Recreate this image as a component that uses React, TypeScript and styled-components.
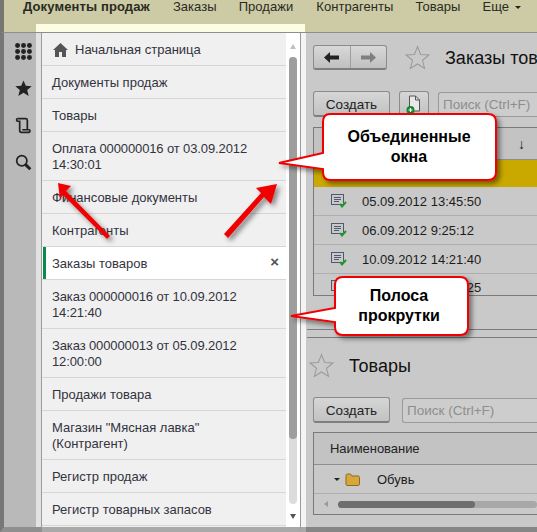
import React from "react";
import styled, { createGlobalStyle } from "styled-components";

const Global = createGlobalStyle`
  html, body { margin: 0; padding: 0; background: #c9c9c9; }
  body { font-family: "Liberation Sans", Arial, sans-serif; }
  * { box-sizing: border-box; }
`;

const Page = styled.div`
  position: relative;
  width: 537px;
  height: 532px;
  overflow: hidden;
  display: flex;
  flex-direction: column;
  background: #7a7a7a;
`;

const TopBar = styled.header`
  position: relative;
  height: 33px;
  flex: none;
  background: #cccba6;
  border-left: 4px solid #777770;
  border-bottom: 1px solid #8e8e8a;
  padding: 0 0 0 19px;
  display: flex;
  align-items: flex-start;
  font-size: 13px;
  line-height: 14px;
  color: #2a2a22;
  &::after {
    content: "";
    position: absolute;
    left: 32px;
    top: 24px;
    width: 269px;
    height: 8px;
    background: #fdfde6;
  }
`;

const MenuItem = styled.span<{ $bold?: boolean; $after: number }>`
  font-weight: ${(p) => (p.$bold ? 700 : 400)};
  letter-spacing: ${(p) => (p.$bold ? "0.12px" : "0.05px")};
  margin-right: ${(p) => p.$after}px;
  white-space: nowrap;
`;

const Caret = styled.span`
  display: inline-block;
  margin-left: 6px;
  vertical-align: 2px;
  border-left: 3px solid transparent;
  border-right: 3px solid transparent;
  border-top: 3px solid #222;
`;

const Body = styled.div`
  flex: 1;
  min-height: 0;
  display: flex;
`;

const Rail = styled.nav`
  width: 42px;
  flex: none;
  border-left: 4px solid #777777;
  border-right: 1px solid #9b9b9b;
  border-bottom: 5px solid #8f8f8f;
  box-shadow: inset -5px 0 0 #e2e2e2;
  background: #b9b9b9;
  padding: 10px 7px 0 9px;
  display: flex;
  flex-direction: column;
  align-items: center;
  gap: 20px;
`;

const RailIcon = styled.svg`
  width: 17px;
  height: 17px;
  flex: none;
  display: block;
`;

const ListPanel = styled.aside`
  width: 244px;
  flex: none;
  background: #f0f0f0;
  border-bottom: 5px solid #a9a9a9;
  display: flex;
  flex-direction: column;
`;

const Item = styled.div<{ $active?: boolean; $tight?: boolean }>`
  position: relative;
  flex: none;
  padding: 9px 8px 7px 10px;
  display: flex;
  align-items: center;
  font-size: 13px;
  line-height: 16px;
  letter-spacing: ${(p) => (p.$tight ? "-0.12px" : "0")};
  color: #333340;
  background: ${(p) => (p.$active ? "#ffffff" : "transparent")};
  border-bottom: 1px solid #d6d6d6;
  ${(p) => (p.$active ? "box-shadow: inset 1px 0 0 #fff, inset 4px 0 0 #0b8a4a;" : "")}
`;

const Close = styled.span`
  position: absolute;
  right: 7px;
  top: 7px;
  font-size: 15px;
  font-weight: 700;
  color: #555;
`;

const HomeGlyph = styled.svg`
  width: 15px;
  height: 14px;
  margin-right: 7px;
  margin-left: 1px;
`;

const ScrollGutter = styled.div`
  width: 15px;
  flex: none;
  background: #fff;
  border-right: 1px solid #9a9a9a;
  border-bottom: 5px solid #a9a9a9;
  display: flex;
  flex-direction: column;
  align-items: center;
  padding: 11px 0 8px 0;
`;

const ArrowUp = styled.span`
  border-left: 3px solid transparent;
  border-right: 3px solid transparent;
  border-bottom: 5px solid #c0c0c0;
`;

const ArrowDown = styled.span`
  border-left: 3px solid transparent;
  border-right: 3px solid transparent;
  border-top: 5px solid #555;
  margin-top: 10px;
`;

const Track = styled.div`
  flex: 1;
  width: 8px;
  margin-top: 8px;
  border-radius: 4px;
  background: #dcdcdc;
  display: flex;
`;

const Thumb = styled.div`
  width: 8px;
  height: 382px;
  border-radius: 4px;
  background: #9e9e9e;
`;

const WhiteSep = styled.div`
  width: 5px;
  flex: none;
  background: #f4f4f4;
  border-bottom: 5px solid #a9a9a9;
`;

const Main = styled.main`
  flex: 1;
  min-width: 0;
  background: #c9c9c9;
  border-bottom: 5px solid #868686;
  display: flex;
  flex-direction: column;
  overflow: hidden;
`;

const TopSection = styled.section`
  height: 305px;
  flex: none;
  padding: 12px 0 0 7px;
  display: flex;
  flex-direction: column;
`;

const Row = styled.div`
  display: flex;
  align-items: center;
`;

const HeadRow = styled(Row)`
  gap: 15px;
`;

const NavGroup = styled.div`
  width: 74px;
  height: 25px;
  flex: none;
  margin-right: 3px;
  border: 1px solid #8b8b8b;
  border-bottom: 2px solid #7e7e7e;
  border-radius: 3px;
  background: linear-gradient(#d8d8d8, #c0c0c0);
  display: flex;
`;

const NavBtn = styled.div<{ $first?: boolean }>`
  flex: 1;
  display: flex;
  align-items: center;
  justify-content: center;
  ${(p) => (p.$first ? "border-right: 1px solid #a0a0a0;" : "")}
`;

const Star = styled.svg`
  width: 25px;
  height: 25px;
  flex: none;
`;

const Title = styled.h2`
  margin: 0;
  font-size: 18px;
  line-height: 22px;
  font-weight: 400;
  color: #111;
  white-space: nowrap;
`;

const Toolbar = styled(Row)`
  margin-top: 21px;
  gap: 9px;
`;

const Button = styled.div<{ $w: number }>`
  width: ${(p) => p.$w}px;
  height: 26px;
  border: 1px solid #8b8b8b;
  border-bottom: 2px solid #7e7e7e;
  border-radius: 3px;
  background: linear-gradient(#d6d6d6, #c2c2c2);
  font-size: 13.5px;
  line-height: 25px;
  text-align: center;
  color: #222;
  flex: none;
`;

const Search = styled.div`
  flex: 1;
  height: 25px;
  border: 1px solid #9a9a9a;
  border-right: none;
  border-radius: 3px 0 0 3px;
  background: #cdcdcd;
  padding-left: 4px;
  font-size: 13.5px;
  line-height: 23px;
  color: #8e8e8e;
  white-space: nowrap;
`;

const Table = styled.div<{ $h: number; $mt: number }>`
  margin-top: ${(p) => p.$mt}px;
  height: ${(p) => p.$h}px;
  flex: none;
  border: 1px solid #7a7a7a;
  border-right: none;
  display: flex;
  flex-direction: column;
  overflow: hidden;
`;

const HeaderRow = styled.div`
  height: 32px;
  flex: none;
  background: #c3c3c3;
  border-bottom: 1px solid #8e8e8e;
  font-size: 13px;
  letter-spacing: -0.05px;
  color: #222;
  padding-left: 16px;
  display: flex;
  align-items: center;
  justify-content: space-between;
`;

const SortMark = styled.span`
  margin-right: 12px;
  font-size: 14px;
`;

const HighlightRow = styled.div`
  height: 27px;
  flex: none;
  background: #c9a800;
`;

const DataRow = styled.div<{ $h: number }>`
  height: ${(p) => p.$h}px;
  flex: none;
  border-bottom: 1px solid #aeaeae;
  display: flex;
  align-items: center;
  padding-left: 17px;
  gap: 15px;
  font-size: 13px;
  line-height: 13px;
  color: #1c1c1c;
  white-space: nowrap;
`;

const Splitter = styled.div`
  height: 9px;
  margin-top: 33px;
  flex: none;
  margin-left: -6px;
  border-top: 1px solid #7c7c7c;
  border-bottom: 1px solid #7c7c7c;
`;

const LowerSection = styled.section`
  padding: 15px 0 0 7px;
  display: flex;
  flex-direction: column;
`;

const LowerHead = styled(Row)`
  margin-left: -4px;
  gap: 15px;
`;

const LowerToolbar = styled(Row)`
  margin-top: 19px;
  gap: 12px;
`;

const Folder = styled.svg`
  width: 15px;
  height: 13px;
  flex: none;
  margin: 0 2px 0 1px;
`;

const TreeCaret = styled.span`
  border-left: 3px solid transparent;
  border-right: 3px solid transparent;
  border-top: 3px solid #222;
  margin-left: 3px;
  margin-right: -11px;
`;

const HScroll = styled.div`
  flex: 1;
  display: flex;
  align-items: center;
  padding-left: 10px;
  gap: 10px;
`;

const HArrow = styled.span`
  border-top: 3px solid transparent;
  border-bottom: 3px solid transparent;
  border-right: 4px solid #999;
`;

const HTrack = styled.div`
  flex: 1;
  height: 7px;
  border-radius: 4px;
  background: #a8a8a8;
`;

const HThumb = styled.div`
  width: 137px;
  height: 7px;
  border-radius: 4px;
  background: #6e6e6e;
`;

const Overlay = styled.svg`
  position: absolute;
  left: 0;
  top: 0;
  width: 537px;
  height: 532px;
  pointer-events: none;
`;

const CalloutText = styled.div<{ $x: number; $y: number; $w: number }>`
  position: absolute;
  left: ${(p) => p.$x}px;
  top: ${(p) => p.$y}px;
  width: ${(p) => p.$w}px;
  text-align: center;
  font-size: 16px;
  line-height: 19.5px;
  font-weight: 700;
  color: #000;
`;

const items: { t: React.ReactNode; active?: boolean; home?: boolean; tight?: boolean }[] = [
  { t: "Начальная страница", home: true },
  { t: "Документы продаж" },
  { t: "Товары" },
  { t: <>Оплата 000000016 от 03.09.2012<br />14:30:01</>, tight: true },
  { t: "Финансовые документы" },
  { t: "Контрагенты" },
  { t: "Заказы товаров", active: true },
  { t: <>Заказ 000000016 от 10.09.2012<br />14:21:40</>, tight: true },
  { t: <>Заказ 000000013 от 05.09.2012<br />12:00:00</>, tight: true },
  { t: "Продажи товара" },
  { t: <>Магазин "Мясная лавка"<br />(Контрагент)</> },
  { t: "Регистр продаж" },
  { t: "Регистр товарных запасов" },
];

const DocCheck = () => (
  <svg width="16" height="14" viewBox="0 0 16 14" style={{ flex: "none" }}>
    <rect x="0.5" y="0.5" width="12" height="10" fill="none" stroke="#4f5a72" />
    <path d="M3 3.5h7M3 5.5h7M3 7.5h5" stroke="#4f5a72" />
    <path d="M9 10l2 2.500 4-4.500" fill="none" stroke="#1f9a2a" strokeWidth="2" />
  </svg>
);

const StarIcon = () => (
  <Star viewBox="0 0 24 24">
    <path d="M12 1.500l3 7.600 8 .5-6.200 5.100 2 7.800L12 18.200 5.200 22.500l2-7.800L1 9.600l8-.5z" fill="none" stroke="#9a9a9a" />
  </Star>
);

export default function App() {
  return (
    <Page>
      <Global />
      <TopBar>
        <MenuItem $bold $after={23}>Документы продаж</MenuItem>
        <MenuItem $after={22}>Заказы</MenuItem>
        <MenuItem $after={23}>Продажи</MenuItem>
        <MenuItem $after={22}>Контрагенты</MenuItem>
        <MenuItem $after={22}>Товары</MenuItem>
        <MenuItem $after={0}>Еще<Caret /></MenuItem>
      </TopBar>
      <Body>
        <Rail>
          <RailIcon viewBox="0 0 20 20" fill="#222">
            {[3, 10, 17].flatMap((y) =>
              [3, 10, 17].map((x) => <circle key={`${x}-${y}`} cx={x} cy={y} r="2.900" />)
            )}
          </RailIcon>
          <RailIcon viewBox="0 0 20 20" fill="#222">
            <path d="M10 .5l2.700 6.300 7 .5-5.400 4.500 1.800 6.900L10 15 3.900 18.700l1.800-6.900L.3 7.300l7-.5z" />
          </RailIcon>
          <RailIcon viewBox="0 0 20 20" fill="none" stroke="#222" strokeWidth="2">
            <path d="M3 2h10c1 0 1.500 1 1.500 2v11" />
            <path d="M3 2c-1.500 0-1.500 3 0 3h2.500v11c0 1.500 1 2 2 2h9c1.500 0 1.500-3 0-3H8.500" />
          </RailIcon>
          <RailIcon viewBox="0 0 20 20" fill="none" stroke="#222">
            <circle cx="8" cy="8" r="6" strokeWidth="2" />
            <path d="M12.500 12.500l5.500 5.500" strokeWidth="3.500" />
          </RailIcon>
        </Rail>
        <ListPanel>
          {items.map((it, i) => (
            <Item key={i} $active={it.active} $tight={it.tight}>
              {it.home && (
                <HomeGlyph viewBox="0 0 15 14">
                  <path d="M7.500 0L0 7h2v7h4V9h3v5h4V7h2z" fill="#555" />
                </HomeGlyph>
              )}
              <span>{it.t}</span>
              {it.active && <Close>×</Close>}
            </Item>
          ))}
        </ListPanel>
        <ScrollGutter>
          <ArrowUp />
          <Track>
            <Thumb />
          </Track>
          <ArrowDown />
        </ScrollGutter>
        <WhiteSep />
        <Main>
          <TopSection>
            <HeadRow>
              <NavGroup>
                <NavBtn $first>
                  <svg width="16" height="11" viewBox="0 0 16 11">
                    <path d="M0 5.500L6 0v3.500h9v4H6V11z" fill="#222" />
                  </svg>
                </NavBtn>
                <NavBtn>
                  <svg width="16" height="11" viewBox="0 0 16 11">
                    <path d="M16 5.500L10 0v3.500H1v4h9V11z" fill="#7f7f7f" />
                  </svg>
                </NavBtn>
              </NavGroup>
              <StarIcon />
              <Title>Заказы товаров</Title>
            </HeadRow>
            <Toolbar>
              <Button $w={77}>Создать</Button>
              <Button $w={30}>
                <svg width="16" height="20" viewBox="0 0 16 20" style={{ marginTop: 3 }}>
                  <path d="M3.500 1h6l4 4v11h-10z" fill="#e8e8e8" stroke="#555" />
                  <path d="M9.500 1v4h4" fill="none" stroke="#555" />
                  <circle cx="4.500" cy="15" r="4" fill="#0d8a2a" />
                  <path d="M2.500 15h4M4.500 13v4" stroke="#fff" strokeWidth="1.200" />
                </svg>
              </Button>
              <Search>Поиск (Ctrl+F)</Search>
            </Toolbar>
            <Table $h={169} $mt={10}>
              <HeaderRow>
                <span />
                <SortMark>↓</SortMark>
              </HeaderRow>
              <HighlightRow />
              {["05.09.2012 13:45:50", "06.09.2012 9:25:12", "10.09.2012 14:21:40", "12.09.2012 14:25:25"].map((d, i) => (
                <DataRow key={d} $h={i === 3 ? 27 : 29}>
                  <DocCheck />
                  <span>{d}</span>
                </DataRow>
              ))}
            </Table>
            <Splitter />
          </TopSection>
          <LowerSection>
            <LowerHead>
              <StarIcon />
              <Title>Товары</Title>
            </LowerHead>
            <LowerToolbar>
              <Button $w={77}>Создать</Button>
              <Search>Поиск (Ctrl+F)</Search>
            </LowerToolbar>
            <Table $h={83} $mt={9}>
              <HeaderRow>Наименование</HeaderRow>
              <DataRow $h={29}>
                <TreeCaret />
                <Folder viewBox="0 0 15 13">
                  <path d="M1 2.500C1 1.500 1.500 1 2.500 1h3l1.500 2h6c1 0 1.500.5 1.500 1.500V11c0 1-.5 1.500-1.500 1.500h-10C1.500 12.500 1 12 1 11z" fill="#d9a63c" stroke="#8a6a1f" />
                </Folder>
                <span>Обувь</span>
              </DataRow>
              <HScroll>
                <HArrow />
                <HTrack>
                  <HThumb />
                </HTrack>
              </HScroll>
            </Table>
          </LowerSection>
        </Main>
      </Body>
      <Overlay viewBox="0 0 537 532">
        <defs>
          <filter id="sh" x="-20%" y="-20%" width="140%" height="140%">
            <feDropShadow dx="3" dy="3" stdDeviation="2.500" floodColor="#000" floodOpacity="0.45" />
          </filter>
        </defs>
        <g filter="url(#sh)">
          <path d="M58 183L71 186L66 191L110 236L107 239L63 195L60 199Z" fill="#f00000" />
          <path d="M277 184L271 204L264 197L228 238L224 234L261 193L256 188Z" fill="#f00000" />
          <path d="M330 114H488Q496 114 496 122V172Q496 180 488 180H330Q323 180 323 172V169L279 163L323 153V122Q323 114 330 114Z" fill="#fff" stroke="#f00000" strokeWidth="2" />
          <path d="M343 277H460Q468 277 468 285V327Q468 335 460 335H343Q335 335 335 327V322L291 316L335 308V285Q335 277 343 277Z" fill="#fff" stroke="#f00000" strokeWidth="2" />
        </g>
      </Overlay>
      <CalloutText $x={322} $y={127} $w={174}>Объединенные<br />окна</CalloutText>
      <CalloutText $x={333} $y={286} $w={132}>Полоса<br />прокрутки</CalloutText>
    </Page>
  );
}
